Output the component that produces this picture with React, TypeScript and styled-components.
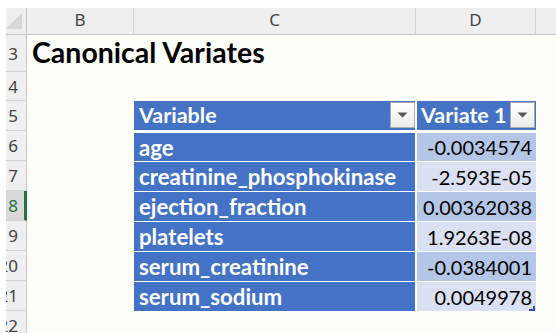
import React from 'react';
import styled, { createGlobalStyle } from 'styled-components';

const GlobalStyle = createGlobalStyle`
  html, body { margin: 0; padding: 0; background: #ffffff; }
  body { width: 556px; height: 333px; overflow: hidden; }
`;

const Frame = styled.div`
  width: 556px;
  height: 333px;
  box-sizing: border-box;
  padding: 8px 0 0 6px;
  overflow: hidden;
  background: #ffffff;
`;

const Sheet = styled.div`
  display: grid;
  grid-template-columns: 21px 107px 282px 120px 40px;
  grid-template-rows: 27px 37px 29px repeat(8, 30px);
  background: #fdfdfa;
  font-family: Lato, 'Liberation Sans', sans-serif;
`;

const Corner = styled.div`
  background: #efefef;
  border-right: 1px solid #c6c6c6;
  border-bottom: 1px solid #c6c6c6;
  display: flex;
  justify-content: flex-end;
  align-items: flex-end;
  padding: 0 4px 4px 0;
  overflow: hidden;
`;

const ColHead = styled.div`
  background: #efefef;
  border-right: 1px solid #d6d6d6;
  border-bottom: 1px solid #c6c6c6;
  display: flex;
  align-items: center;
  justify-content: center;
  padding-bottom: 3px;
  box-sizing: border-box;
  font-family: 'Noto Sans', 'Open Sans', sans-serif;
  font-size: 17px;
  color: #444444;
`;

const RowHead = styled.div<{ $selected?: boolean }>`
  background: ${(p) => (p.$selected ? '#d9d9d9' : '#efefef')};
  border-bottom: 1px solid #d6d6d6;
  border-right: ${(p) => (p.$selected ? '3px solid #217346' : '1px solid #c6c6c6')};
  box-sizing: border-box;
  display: flex;
  align-items: center;
  justify-content: flex-end;
  padding-right: ${(p) => (p.$selected ? '6px' : '8px')};
  overflow: hidden;
  white-space: nowrap;
  font-family: 'Noto Sans', 'Open Sans', sans-serif;
  font-size: 17px;
  color: ${(p) => (p.$selected ? '#217346' : '#444444')};
`;

const Cell = styled.div`
  min-width: 0;
`;

const TitleCell = styled.div`
  display: flex;
  align-items: flex-end;
  padding: 0 0 6px 5px;
  white-space: nowrap;
  font-size: 28.5px;
  font-weight: 700;
  line-height: 1;
  color: #000000;
`;

const HeadCell = styled.div<{ $last?: boolean }>`
  background: #4472c4;
  border-bottom: 1px solid #ffffff;
  border-left: ${(p) => (p.$last ? '1px solid #ffffff' : 'none')};
  border-right: ${(p) => (p.$last ? 'none' : '1px solid #ffffff')};
  box-sizing: border-box;
  display: flex;
  align-items: center;
  justify-content: space-between;
  padding-left: ${(p) => (p.$last ? '4px' : '5px')};
  padding-right: ${(p) => (p.$last ? '1px' : '0')};
  color: #ffffff;
  font-size: 21.5px;
  font-weight: 700;
  line-height: 29px;
  white-space: nowrap;
`;

const FilterButton = styled.div`
  width: 25px;
  height: 26px;
  box-sizing: border-box;
  margin-top: 1px;
  border: 1px solid #ababab;
  background: linear-gradient(#ffffff, #ececec);
  display: flex;
  align-items: center;
  justify-content: center;
  align-self: flex-start;
`;

const NameCell = styled.div<{ $first?: boolean }>`
  background: #4472c4;
  border-top: ${(p) => (p.$first ? '2px' : '1px')} solid #ffffff;
  border-right: 1px solid #ffffff;
  box-sizing: border-box;
  display: flex;
  align-items: center;
  padding-left: 5px;
  color: #ffffff;
  font-size: 22.2px;
  font-weight: 700;
  white-space: nowrap;
`;

const ValueCell = styled.div<{ $first?: boolean; $band: boolean }>`
  position: relative;
  background: ${(p) => (p.$band ? '#b4c6e7' : '#d9e1f2')};
  border-top: ${(p) => (p.$first ? '2px' : '1px')} solid #ffffff;
  border-left: 1px solid #ffffff;
  box-sizing: border-box;
  display: flex;
  align-items: center;
  justify-content: flex-end;
  padding-right: 4px;
  color: #000000;
  font-size: 20px;
  white-space: nowrap;
`;

const ResizeHandle = styled.svg`
  position: absolute;
  right: 1px;
  bottom: 0;
`;

type Row = { n: number; name?: string; value?: string };

const data: Row[] = [
  { n: 16, name: 'age', value: '-0.0034574' },
  { n: 17, name: 'creatinine_phosphokinase', value: '-2.593E-05' },
  { n: 18, name: 'ejection_fraction', value: '0.00362038' },
  { n: 19, name: 'platelets', value: '1.9263E-08' },
  { n: 20, name: 'serum_creatinine', value: '-0.0384001' },
  { n: 21, name: 'serum_sodium', value: '0.0049978' },
];

const SELECTED_ROW = 18;

const Arrow = () => (
  <svg width="11" height="6" viewBox="0 0 11 6">
    <path d="M0.5 0.5 H10.5 L5.5 5.5 Z" fill="#5a5a5a" />
  </svg>
);

const Blank = () => (
  <>
    <Cell />
    <Cell />
    <Cell />
    <Cell />
  </>
);

export default function App() {
  return (
    <>
      <GlobalStyle />
      <Frame>
        <Sheet>
          <Corner>
            <svg width="18" height="18" viewBox="0 0 18 18">
              <path d="M18 0 V18 H0 Z" fill="#d8d8d8" />
            </svg>
          </Corner>
          <ColHead>B</ColHead>
          <ColHead>C</ColHead>
          <ColHead>D</ColHead>
          <ColHead />

          <RowHead>13</RowHead>
          <TitleCell>Canonical Variates</TitleCell>
          <Cell />
          <Cell />
          <Cell />

          <RowHead>14</RowHead>
          <Blank />

          <RowHead>15</RowHead>
          <Cell />
          <HeadCell>
            Variable
            <FilterButton>
              <Arrow />
            </FilterButton>
          </HeadCell>
          <HeadCell $last>
            Variate 1
            <FilterButton>
              <Arrow />
            </FilterButton>
          </HeadCell>
          <Cell />

          {data.map((r, i) => (
            <React.Fragment key={r.n}>
              <RowHead $selected={r.n === SELECTED_ROW}>{r.n}</RowHead>
              <Cell />
              <NameCell $first={i === 0}>{r.name}</NameCell>
              <ValueCell $first={i === 0} $band={i % 2 === 0}>
                {r.value}
                {i === data.length - 1 && (
                  <ResizeHandle width="6" height="5" viewBox="0 0 6 5">
                    <path d="M6 0 V5 H0 V3 H4 V0 Z" fill="#2f4fa8" />
                  </ResizeHandle>
                )}
              </ValueCell>
              <Cell />
            </React.Fragment>
          ))}

          <RowHead>22</RowHead>
          <Blank />
        </Sheet>
      </Frame>
    </>
  );
}
